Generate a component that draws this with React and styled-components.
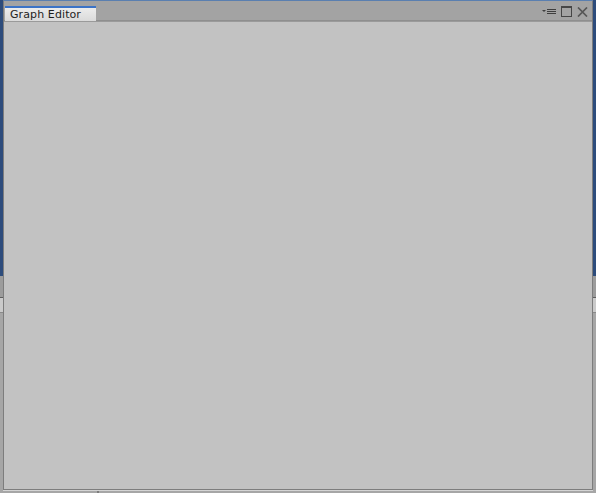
import React from "react";
import styled, { createGlobalStyle } from "styled-components";

const Global = createGlobalStyle`
  html, body { margin: 0; padding: 0; background: #a4a4a4; }
  body { width: 596px; height: 493px; overflow: hidden; font-family: "DejaVu Sans", Verdana, sans-serif; }
`;

const Desktop = styled.div`
  position: relative;
  width: 596px;
  height: 493px;
  display: flex;
  flex-direction: column;
  background: #a4a4a4;
  overflow: hidden;
`;

const BluePanel = styled.div`
  height: 276px;
  background: #2d4c7c;
`;

const GrayBand = styled.div`
  height: ${(p) => p.$h}px;
  background: ${(p) => p.$bg};
  border-bottom: 1px solid ${(p) => p.$line || "transparent"};
`;

const BottomRow = styled.div`
  flex: 1;
  display: flex;
`;

const BottomCell = styled.div`
  width: ${(p) => (p.$w ? `${p.$w}px` : "auto")};
  flex: ${(p) => (p.$w ? "none" : 1)};
  background: #a6a6a6;
  border-right: ${(p) => (p.$divider ? "2px solid #7c7c7c" : "none")};
`;

const Window = styled.div`
  position: absolute;
  left: 3px;
  top: 0;
  width: 590px;
  height: 490px;
  box-sizing: border-box;
  display: flex;
  flex-direction: column;
  background: #a3a3a3;
  border: 1px solid #7d7d7d;
  border-top-color: #5a7fb0;
  box-shadow: 0 1px 0 #d4d4d4;
`;

const TabBar = styled.div`
  height: 19px;
  display: flex;
  align-items: flex-end;
  padding-left: 1px;
  background: #a3a3a3;
  border-bottom: 1px solid #8e8e8e;
`;

const Tab = styled.div`
  width: 86px;
  height: 13px;
  display: flex;
  align-items: flex-end;
  padding-left: 5px;
  margin-bottom: -1px;
  font-size: 11px;
  line-height: 13px;
  color: #1e1e1e;
  background: linear-gradient(#ececec, #dadada);
  border-top: 2px solid #3b73c7;
  letter-spacing: 0.1px;
`;

const Spacer = styled.div`
  flex: 1;
`;

const Controls = styled.div`
  display: flex;
  align-items: center;
  gap: 5px;
  height: 19px;
  padding-top: 2px;
  padding-right: 4px;
  box-sizing: border-box;
  align-self: flex-start;
`;

const Icon = styled.svg`
  display: block;
`;

const Content = styled.div`
  flex: 1;
  background: #c2c2c2;
  border-top: 1px solid #9a9a9a;
`;

export default function App() {
  return (
    <>
      <Global />
      <Desktop>
        <BluePanel />
        <GrayBand $h={21} $bg="#9c9c9c" $line="#5e5e5e" />
        <GrayBand $h={14} $bg="#cacaca" $line="#8a8a8a" />
        <BottomRow>
          <BottomCell $w={97} $divider />
          <BottomCell />
        </BottomRow>
        <Window>
          <TabBar>
            <Tab>Graph Editor</Tab>
            <Spacer />
            <Controls>
              <Icon width="14" height="9" viewBox="0 0 14 9">
                <path d="M0 3 L4 3 L2 5 Z" fill="#3e3e3e" />
                <rect x="5" y="2" width="9" height="1" fill="#3e3e3e" />
                <rect x="5" y="4" width="9" height="1" fill="#3e3e3e" />
                <rect x="5" y="6" width="9" height="1" fill="#3e3e3e" />
              </Icon>
              <Icon width="11" height="11" viewBox="0 0 11 11">
                <rect x="0.5" y="0.5" width="10" height="10" fill="none" stroke="#464646" />
                <rect x="0" y="0" width="11" height="2" fill="#464646" />
              </Icon>
              <Icon width="11" height="10" viewBox="0 0 11 10">
                <path d="M1 0.5 L10 9.5 M10 0.5 L1 9.5" stroke="#555555" strokeWidth="1.7" />
              </Icon>
            </Controls>
          </TabBar>
          <Content />
        </Window>
      </Desktop>
    </>
  );
}
